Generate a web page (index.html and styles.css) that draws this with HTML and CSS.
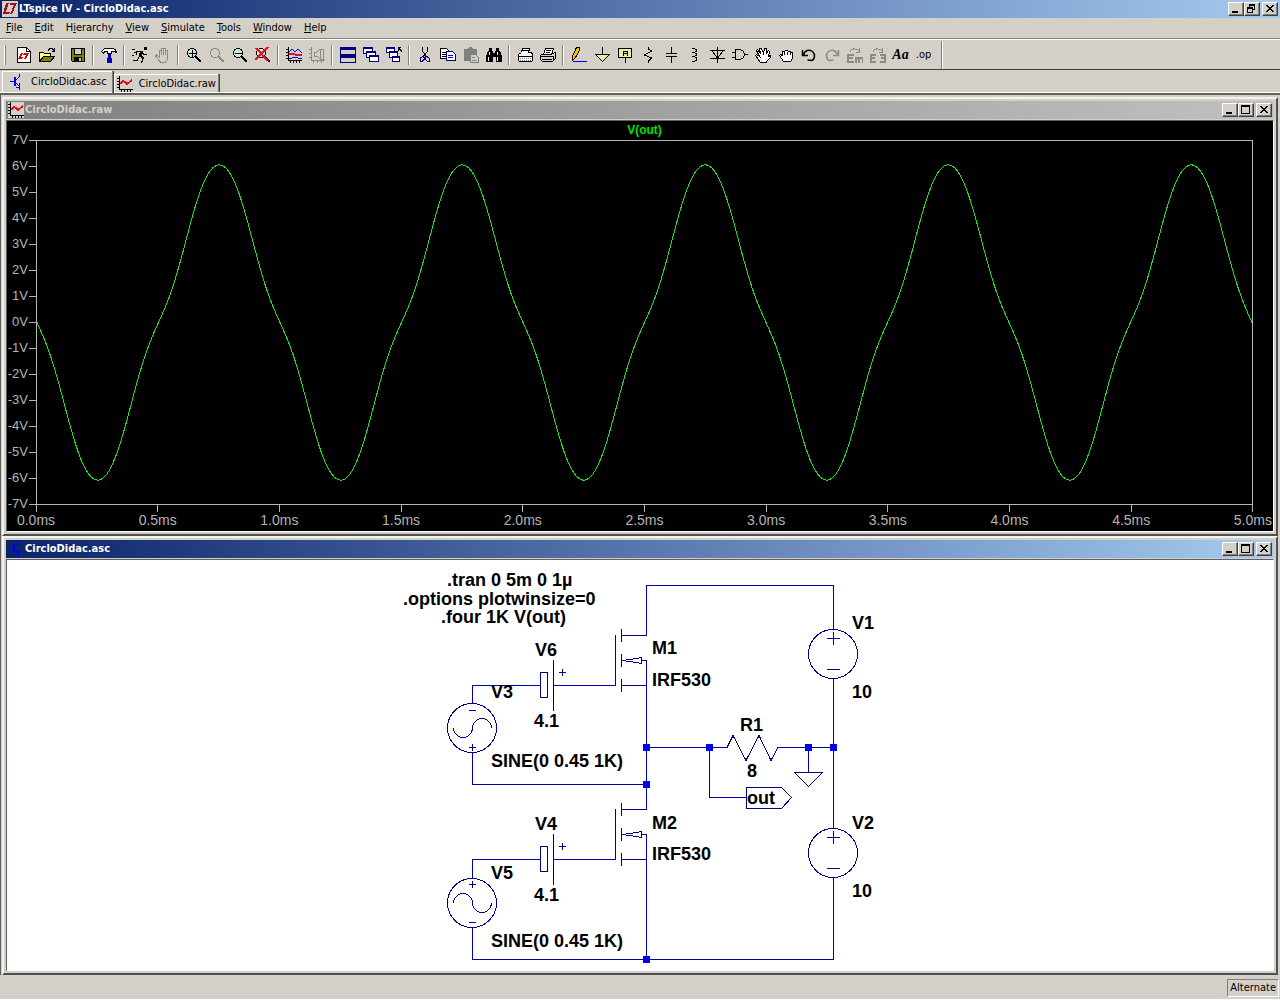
FILE: index.html
```
<!DOCTYPE html>
<html lang="en">
<head>
    <meta charset="UTF-8">
    <meta name="viewport" content="width=device-width, initial-scale=1.0">
    <title>LTspice IV - CircloDidac.asc</title>
    <link rel="stylesheet" href="styles.css">
</head>
<body>
    <!-- shared icons -->
    <svg class="defs" aria-hidden="true">
        <symbol id="i-min" viewBox="0 0 12 10"><path d="M2 7h6v2H2z"/></symbol>
        <symbol id="i-max" viewBox="0 0 12 10"><path fill-rule="evenodd" d="M1 0h9v9H1zM2 2v6h7V2z"/></symbol>
        <symbol id="i-restore" viewBox="0 0 12 10"><path fill-rule="evenodd" d="M3 0h6v6H7v3H1V3h2zM4 2v1h3v2h1V2zM2 5v3h4V5z"/></symbol>
        <symbol id="i-close" viewBox="0 0 12 10"><path d="M2 1h2v1h1v1h2V2h1V1h2v1H9v1H8v1H7v1h1v1h1v1h1v1H8V7H7V6H5v1H4v1H2V7h1V6h1V5h1V4H4V3H3V2H2z"/></symbol>
        <symbol id="i-graph" viewBox="0 0 16 16">
            <path class="k" d="M2.500 0v13.500H16M0 2.500h2M0 5.500h2M0 8.500h2M0 11.500h2M4.500 14v2M7.500 14v2M10.500 14v2M13.500 14v2"/>
            <path class="red wide" d="M3 8l3-3 2 1 2 2 5-4"/>
        </symbol>
        <symbol id="i-npn" viewBox="0 0 16 16"><path class="blue wide" d="M6 3v9"/><path class="blue" d="M1 7.500h5M6.500 6.500l4-4V0M6.500 8.500l4 4V16M10.500 9v4H7"/></symbol>
        <symbol id="i-lens" viewBox="0 0 16 16"><circle cx="6" cy="6" r="4.500"/><path class="wide" d="M10 10l5 5"/></symbol>
    </svg>

    <header class="title-bar">
        <svg class="app-icon" viewBox="0 0 16 16"><path fill="#d4d0c8" d="M0 0h16v16H0z"/><path fill="#a01020" d="M4 2h3L4 11h4l-1 2H1zM8 2h7l-5 11H8l4-9H8z"/></svg>
        <h1>LTspice IV - CircloDidac.asc</h1>
        <div class="controls">
            <button aria-label="Minimize"><svg><use href="#i-min"/></svg></button>
            <button aria-label="Restore"><svg><use href="#i-restore"/></svg></button>
            <button class="close" aria-label="Close"><svg><use href="#i-close"/></svg></button>
        </div>
    </header>

    <nav class="menu">
        <button><u>F</u>ile</button>
        <button><u>E</u>dit</button>
        <button>H<u>i</u>erarchy</button>
        <button><u>V</u>iew</button>
        <button><u>S</u>imulate</button>
        <button><u>T</u>ools</button>
        <button><u>W</u>indow</button>
        <button><u>H</u>elp</button>
    </nav>

    <div class="toolbar">
        <i class="grip"></i>
        <button aria-label="New schematic"><svg viewBox="0 0 16 16"><path fill="#fff" stroke="#000" d="M1.500.5h9l4 4v11h-13z"/><path class="k" d="M10.500.5v4h4"/><path fill="#e00000" d="M5 6h2l-2 4h2l-1 2H2zM8 6h5l-3 6H8l2-4H7z"/></svg></button>
        <button aria-label="Open"><svg viewBox="0 0 16 16"><path fill="#ffff80" stroke="#000" d="M.5 14.500v-9h4l1 1h6v3"/><path fill="#808000" stroke="#000" d="M.5 14.500l4-5h11l-4 5z"/><path class="k" d="M9 3.500l2-2h2l2 2M15.500 1v3h-3"/></svg></button>
        <i class="sep"></i>
        <button aria-label="Save"><svg viewBox="0 0 16 16"><path fill="#808000" stroke="#000" d="M1.500 1.500h13v13h-12l-1-1z"/><path fill="#d4d0c8" stroke="#000" d="M4.500 1.500h7v6h-7z"/><path d="M4 10h8v5H4z"/><path fill="#d4d0c8" d="M9 11h2v3H9z"/></svg></button>
        <i class="sep"></i>
        <button aria-label="Control panel"><svg viewBox="0 0 16 16"><path fill="#fff" stroke="#000" d="M.5 4.500l3-3h7c3 0 5 2 5 4l-2-1h-3v2h-4v-2h-3l-1 2z"/><path fill="#0000c0" d="M7 7h3v4h1v5H6v-5h1z"/></svg></button>
        <i class="sep"></i>
        <button aria-label="Run"><svg viewBox="0 0 16 16"><path d="M12 0h3v3h-3zM8 4h3v2l-1 3 2 2-1 1-4-3z"/><path class="k" d="M4 7.500l1-3h5l2 3h3M10.500 10v3l-1 3M7.500 9l-2 4H1M0 2.500h3M2 5.500h2M0 8.500h2"/></svg></button>
        <button aria-label="Halt" disabled><svg viewBox="0 0 16 16"><path class="off" d="M4.500 14l-4-5 1-1 3 2V3h2v5V1h2v7V1h2v7V3h2v9l-2 3h-5z"/></svg></button>
        <i class="sep"></i>
        <button aria-label="Zoom in"><svg viewBox="0 0 16 16" class="lens"><use href="#i-lens"/><path class="k" d="M3 6.500h7M6.500 3v7"/></svg></button>
        <button aria-label="Pan" disabled><svg viewBox="0 0 16 16" class="lens gray"><use href="#i-lens"/></svg></button>
        <button aria-label="Zoom out"><svg viewBox="0 0 16 16" class="lens"><use href="#i-lens"/><path class="k" d="M3 6.500h7"/></svg></button>
        <button aria-label="Zoom full extents"><svg viewBox="0 0 16 16" class="lens"><use href="#i-lens"/><path class="red wide" d="M1 1l12 13M13 0L0 13"/></svg></button>
        <i class="sep"></i>
        <button aria-label="Autorange"><svg viewBox="0 0 16 16"><path class="k" d="M2.500 0v13.500H16M0 2.500h2M0 5.500h2M0 8.500h2M0 11.500h2M4.500 14v2M7.500 14v2M10.500 14v2M13.500 14v2"/><path class="blue" d="M3 5l3-3 3 3 3-3 4 4"/><path class="red wide" d="M3 7h5l2 1h6"/><path class="blue" d="M3 11h3l3-1 3 1h4"/></svg></button>
        <button aria-label="Plot settings" disabled><svg viewBox="0 0 16 16"><path class="off" d="M2.500 0v13.500H16M0 2.500h2M0 6.500h2M0 10.500h2M4.500 14v2M8.500 14v2M12.500 14v2M5 5h3l3-3h3v10h-3L8 9H5zM11 2v10"/></svg></button>
        <i class="sep"></i>
        <button aria-label="Tile windows"><svg viewBox="0 0 16 16"><path fill="#000080" d="M0 0h16v16H0z"/><path fill="#d4d0c8" d="M1 3h14v4H1zM1 11h14v4H1z"/></svg></button>
        <button aria-label="Cascade windows"><svg viewBox="0 0 16 16"><g class="win"><path d="M.5.500h9v6h-9zM0 1.500h10"/><path d="M3.500 4.500h9v6h-9zM3 5.500h10"/><path d="M6.500 8.500h9v6h-9zM6 9.500h10"/></g></svg></button>
        <button aria-label="Close all windows"><svg viewBox="0 0 16 16"><g class="win"><path d="M.5.500h8v5h-8zM0 1.500h9"/><path d="M3.500 4.500h8v6h-8zM3 5.500h9"/><path d="M6.500 9.500h7v5h-7zM6 10.500h8"/></g><path class="k" d="M12 .5h3M12.500 0v4M13 1l3 4"/></svg></button>
        <i class="sep"></i>
        <button aria-label="Cut"><svg viewBox="0 0 16 16"><path class="k" d="M5.500 0v4l4 6M10.500 0v4l-4 6"/><path fill="none" stroke="#000080" d="M6.500 9l-3 2v3h2l2-2zM9 9l3 2v3h-2l-2-2z"/></svg></button>
        <button aria-label="Copy"><svg viewBox="0 0 16 16"><path fill="#fff" stroke="#000" d="M.5 1.500h6l3 3v7h-9z"/><path class="k" d="M2 5.500h5M2 7.500h5M2 9.500h5"/><path fill="#fff" stroke="#000080" d="M6.500 4.500h6l3 3v6h-9z"/><path class="blue" d="M8 8.500h5M8 10.500h5"/></svg></button>
        <button aria-label="Paste"><svg viewBox="0 0 16 16"><path fill="#808080" d="M1 2h4l1-2h3l1 2h4v12H1z"/><path fill="#d4d0c8" stroke="#808080" d="M7.500 7.500h5l3 3v5h-8z"/><path class="off" d="M9 10.500h3M9 13h5"/></svg></button>
        <button aria-label="Find"><svg viewBox="0 0 16 16"><path d="M3 1h3v3h1v2h2V4h1V1h3v3h1l2 5v6h-6v-5H7v5H0V9l2-5h1z"/><path fill="#fff" d="M3 5h1v3H3zM11 5h1v3h-1zM2 10h1v4H2zM11 10h1v4h-1z"/></svg></button>
        <i class="sep"></i>
        <button aria-label="Print setup"><svg viewBox="0 0 16 16"><path fill="#fff" stroke="#000" d="M1.500 7.500l3-2 1-4h7l-1 4h3l1 2v6l-1 1h-12l-1-1z"/><path class="k" d="M1 9.500h14M6 3.500h5"/><path fill="none" stroke="#808080" stroke-dasharray="1 1" d="M3 11.500h11M3 13.500h11"/></svg></button>
        <button aria-label="Print"><svg viewBox="0 0 16 16"><path fill="#d4d0c8" stroke="#000" d="M.5 8.500l3-2h9l3-1v6l-3 3h-10l-2-2z"/><path fill="#fff" stroke="#000" d="M3.500 7.500l2-6h8l-2 6z"/><path class="k" d="M6 3.500h5M6 5.500h4M1 9.500h12M2 12.500h10M13 9v5"/></svg></button>
        <i class="sep"></i>
        <button aria-label="Wire"><svg viewBox="0 0 16 16"><path fill="#ffc000" stroke="#000" d="M5.500.5h3v3l-4 7-3 3v-4z"/><path class="blue" d="M2 14.500h14"/></svg></button>
        <button aria-label="Ground"><svg viewBox="0 0 16 16"><path fill="#eeeaa8" stroke="#000" d="M1.500 7.500h14l-7 7z"/><path class="k" d="M8.500 0v7"/></svg></button>
        <button aria-label="Label net"><svg viewBox="0 0 16 16"><path fill="#eeeaa8" stroke="#000" d="M1.500 1.500h13v9h-13z"/><path class="k" d="M8.500 11v5M6.500 9V4.500h4V9M6 6.500h4"/></svg></button>
        <button aria-label="Resistor"><svg viewBox="0 0 16 16"><path class="k" d="M8.500 0v2l3 2-7 4 7 3-3 3v2"/></svg></button>
        <button aria-label="Capacitor"><svg viewBox="0 0 16 16"><path class="k" d="M8.500 0v6M8.500 10v6M3 6.500h11M3 9.500h11"/></svg></button>
        <button aria-label="Inductor"><svg viewBox="0 0 16 16"><path class="k" d="M6 1.500h2l2 1v2l-2 1H6h2l2 1v2l-2 1H6h2l2 1v3l-2 1H6"/></svg></button>
        <button aria-label="Diode"><svg viewBox="0 0 16 16"><path class="k" d="M8.500 0v16M1 3.500h15M1 11.500h15M3 4l5.500 7L14 4"/></svg></button>
        <button aria-label="Component"><svg viewBox="0 0 16 16"><path class="k" d="M3.500 2.500h5l3 2 1 3-1 3-3 2h-5zM0 5.500h3M0 10.500h3M12 7.500h4"/></svg></button>
        <button aria-label="Move"><svg viewBox="0 0 16 16"><path fill="#fff" stroke="#000" d="M5.500 15.500l-5-7 1-1 3 2-3-6 1-1 3 4-1-5h2l2 5 1-5h2v5l2-3 1 1-1 5 2-1v2l-4 4v1z"/></svg></button>
        <button aria-label="Drag"><svg viewBox="0 0 16 16"><path fill="#fff" stroke="#000" d="M5.500 14.500l-4-6 1-1 2 1v-4h2l1-1h2l1 1h2l1 1h1v6l-2 3z"/><path class="k" d="M6.500 5v3M9.500 5v3M12.500 5v3"/></svg></button>
        <button aria-label="Undo"><svg viewBox="0 0 16 16"><path class="k round" d="M2.500 8c1-5 6-6 9-3.500s2.500 8-1 9l-4-.5M1.500 3v5.500H7"/></svg></button>
        <button aria-label="Redo" disabled><svg viewBox="0 0 16 16"><path class="off round" d="M13.500 8c-1-5-6-6-9-3.500s-2.500 8 1 9l4-.5M14.500 3v5.500H9"/></svg></button>
        <button aria-label="Rotate" disabled><svg viewBox="0 0 16 16"><path class="off" d="M3 5c1-4 7-4 9-1M12.500 1v4H9"/><path class="off wide" d="M7 8H1v7h6M1 11h5M9 16v-5h7v5M12 11v5"/></svg></button>
        <button aria-label="Mirror" disabled><svg viewBox="0 0 16 16"><path class="off" d="M3 5c1-4 7-4 9-1M12.500 1v4H9"/><path class="off wide" d="M6 8H1v7h5M1 11h4M10 8h5v7h-5M15 11h-4"/></svg></button>
        <button class="text">Aa</button>
        <button class="directive">.op</button>
        <i class="end"></i>
    </div>

    <div class="tabs">
        <button class="tab active"><svg><use href="#i-npn"/></svg>CircloDidac.asc</button>
        <button class="tab"><svg><use href="#i-graph"/></svg>CircloDidac.raw</button>
    </div>

    <main class="mdi">
        <section class="window">
            <header class="title-bar inactive">
                <svg class="app-icon"><use href="#i-graph"/></svg>
                <h2>CircloDidac.raw</h2>
                <div class="controls">
                    <button aria-label="Minimize"><svg><use href="#i-min"/></svg></button>
                    <button aria-label="Maximize"><svg><use href="#i-max"/></svg></button>
                    <button class="close" aria-label="Close"><svg><use href="#i-close"/></svg></button>
                </div>
            </header>
            <div class="pane plot">
                <div class="trace-name">V(out)</div>
                <ol class="y-axis">
                    <li>7V</li><li>6V</li><li>5V</li><li>4V</li><li>3V</li><li>2V</li><li>1V</li><li>0V</li>
                    <li>-1V</li><li>-2V</li><li>-3V</li><li>-4V</li><li>-5V</li><li>-6V</li><li>-7V</li>
                </ol>
                <div class="graph">
                    <svg viewBox="0 0 1216 364" preserveAspectRatio="none"><path id="trace"/></svg>
                </div>
                <ol class="x-axis">
                    <li>0.0ms</li><li>0.5ms</li><li>1.0ms</li><li>1.5ms</li><li>2.0ms</li><li>2.5ms</li>
                    <li>3.0ms</li><li>3.5ms</li><li>4.0ms</li><li>4.5ms</li><li>5.0ms</li>
                </ol>
            </div>
        </section>

        <section class="window">
            <header class="title-bar">
                <svg class="app-icon"><use href="#i-npn"/></svg>
                <h2>CircloDidac.asc</h2>
                <div class="controls">
                    <button aria-label="Minimize"><svg><use href="#i-min"/></svg></button>
                    <button aria-label="Maximize"><svg><use href="#i-max"/></svg></button>
                    <button class="close" aria-label="Close"><svg><use href="#i-close"/></svg></button>
                </div>
            </header>
            <div class="pane sheet">
                <svg class="schematic" width="490" height="410" viewBox="395 560 490 410">
                    <g class="wires">
                        <path d="M646.500 636v-50.500h187V629M833.500 679v149M833.500 878v81.500h-361V928"/>
                        <path d="M472.500 703v-17.500H540M553 685.500h62M472.500 753v31.500h174M472.500 878v-18.500H540M553 859.500h62"/>
                        <path d="M646.500 660v149.500M646.500 834v125M646 747.500h81M778 747.500h55M709.500 747v50.500H746M808.500 747v25"/>
                    </g>
                    <g class="parts">
                        <!-- mosfets -->
                        <g id="m1"><path d="M615.500 635v51M621.500 629v13M621.500 654v13M621.500 679v13M621 635.500h25M621 685.500h25M622 660.500l15-2 4-1v6l-4-1zM641 660.500h5"/></g>
                        <use href="#m1" y="174"/>
                        <!-- bias batteries -->
                        <g id="v6"><path d="M540.500 672.500h7v25h-7zM553.500 660v51M559 672.500h7M562.500 669v7"/></g>
                        <use href="#v6" y="174"/>
                        <!-- supplies -->
                        <g id="v1"><circle cx="833" cy="654" r="24.500"/><path d="M827 638.500h13M833.500 632v13M827 669.500h13"/></g>
                        <use href="#v1" y="199"/>
                        <!-- sine sources -->
                        <circle cx="472" cy="728" r="24.500"/>
                        <path d="M453.500 728a9.500 9.500 0 0 0 19 0a9.500 9.500 0 0 1 19 0M469 710.500h7M469 747.500h7M472.500 744v7"/>
                        <circle cx="472" cy="903" r="24.500"/>
                        <path d="M453.500 903a9.500 9.500 0 0 1 19 0a9.500 9.500 0 0 0 19 0M469 884.500h7M472.500 881v7M469 922.500h7"/>
                        <!-- load, ground and output label -->
                        <path d="M727 747.500l6-12 13 25 13-25 12 25 7-13M794.500 772.500h28l-14 14zM746.500 787.500h35l10 10-10 11h-35z"/>
                    </g>
                    <g class="nodes">
                        <path d="M643 744h7v7h-7zM643 781h7v7h-7zM643 956h7v7h-7zM706 744h7v7h-7zM805 744h7v7h-7zM830 744h7v7h-7z"/>
                    </g>
                    <g class="labels">
                        <text x="447" y="586">.tran 0 5m 0 1µ</text>
                        <text x="403" y="605">.options plotwinsize=0</text>
                        <text x="441" y="623">.four 1K V(out)</text>
                        <text x="535" y="656">V6</text>
                        <text x="534" y="727">4.1</text>
                        <text x="491" y="698">V3</text>
                        <text x="491" y="767">SINE(0 0.45 1K)</text>
                        <text x="652" y="654">M1</text>
                        <text x="652" y="686">IRF530</text>
                        <text x="535" y="830">V4</text>
                        <text x="534" y="901">4.1</text>
                        <text x="491" y="879">V5</text>
                        <text x="491" y="947">SINE(0 0.45 1K)</text>
                        <text x="652" y="829">M2</text>
                        <text x="652" y="860">IRF530</text>
                        <text x="740" y="731">R1</text>
                        <text x="747" y="777">8</text>
                        <text x="747" y="804">out</text>
                        <text x="852" y="629">V1</text>
                        <text x="852" y="698">10</text>
                        <text x="852" y="829">V2</text>
                        <text x="852" y="897">10</text>
                    </g>
                </svg>
            </div>
        </section>
    </main>

    <footer class="status"><span>Alternate</span></footer>

    <script>
        // 1 kHz output with crossover distortion, in volts
        const harmonics = [[1, -5.58], [3, 0.6], [5, 0.1]];
        const points = [];

        for (let x = 0; x <= 1216; x += 2) {
            const phase = 2 * Math.PI * 5 * x / 1216;
            let v = 0;
            for (const [n, amp] of harmonics) {
                v += amp * Math.sin(n * phase);
            }
            points.push(x + ' ' + (182 - v * 26).toFixed(2));
        }

        document.getElementById('trace').setAttribute('d', 'M' + points.join('L'));
    </script>
</body>
</html>
```
FILE: styles.css
```
* {
    box-sizing: border-box;
}
body {
    margin: 0;
    height: 100vh;
    display: flex;
    flex-direction: column;
    background: #d4d0c8;
    color: #000;
    font: 11px/14px "DejaVu Sans Condensed", Tahoma, sans-serif;
}
button {
    margin: 0;
    padding: 0;
    border: none;
    background: none;
    color: inherit;
    font: inherit;
}
svg {
    display: block;
    flex: none;
    shape-rendering: crispEdges;
}
ol {
    margin: 0;
    padding: 0;
    list-style: none;
}
.defs {
    position: absolute;
    width: 0;
    height: 0;
}
.k, .red, .blue, .off {
    fill: none;
    stroke: #000;
}
.red {
    stroke: #e01020;
}
.blue {
    stroke: #0000e0;
}
.off {
    stroke: #8c8a86;
}
.wide {
    stroke-width: 2;
}
.round {
    stroke-width: 1.5;
    shape-rendering: auto;
}

/* title bars */
.title-bar {
    display: flex;
    align-items: center;
    height: 18px;
    flex: none;
    padding: 0 2px;
    color: #fff;
    background: linear-gradient(to right, #0a246a, #a6caf0);
}
.title-bar.inactive {
    color: #d4d0c8;
    background: linear-gradient(to right, #808080, #c0c0c0);
}
.title-bar h1, .title-bar h2 {
    flex: 1;
    margin: 0 0 0 1px;
    font-size: 11px;
    font-weight: bold;
}
.app-icon {
    width: 16px;
    height: 16px;
}
.inactive .app-icon {
    background: #d4d0c8;
}
.controls {
    display: flex;
}
.controls button {
    width: 16px;
    height: 14px;
    padding: 1px;
    background: #d4d0c8;
    border: 1px solid;
    border-color: #fff #404040 #404040 #fff;
    box-shadow: inset -1px -1px #808080;
    color: #000;
}
.controls svg {
    width: 12px;
    height: 10px;
}
.controls .close {
    margin-left: 2px;
}

/* menu and toolbar */
.menu {
    display: flex;
    height: 21px;
    flex: none;
    border-bottom: 1px solid #808080;
}
.menu button {
    padding: 0 6px;
}
.toolbar {
    display: flex;
    align-items: center;
    height: 31px;
    flex: none;
    padding-left: 4px;
    border-top: 1px solid #fff;
    border-bottom: 1px solid #404040;
}
.toolbar button {
    display: flex;
    justify-content: center;
    align-items: center;
    width: 23px;
    height: 22px;
    flex: none;
}
.toolbar svg {
    width: 16px;
    height: 16px;
}
.grip, .sep, .end {
    flex: none;
    height: 20px;
    border-right: 1px solid #808080;
}
.grip {
    width: 2px;
    margin-right: 6px;
    border-left: 1px solid #fff;
}
.sep {
    width: 2px;
    margin: 0 3px;
    border-left: 1px solid #808080;
    border-right-color: #fff;
}
.end {
    height: 28px;
    width: 2px;
    margin-left: 6px;
    border-left: 1px solid #808080;
    border-right-color: #fff;
}
.lens {
    fill: #c8e8e0;
    stroke: #000;
}
.lens.gray {
    fill: none;
    stroke: #8c8a86;
}
.win path {
    fill: #fff;
    stroke: #000080;
}
.toolbar .text {
    font: italic bold 14px "Liberation Serif", serif;
}
.toolbar .directive {
    font-size: 11px;
}

/* document tabs */
.tabs {
    display: flex;
    align-items: flex-start;
    height: 23px;
    flex: none;
    padding: 1px 2px 0;
    border-bottom: 1px solid #fff;
}
.tab {
    display: flex;
    align-items: center;
    gap: 6px;
    height: 18px;
    margin-top: 3px;
    padding: 0 2px;
    border: 1px solid #fff;
    border-width: 1px 0 0 1px;
    box-shadow: 1px 0 #808080, 2px 0 #404040;
}
.tab.active {
    height: 22px;
    margin: 0 2px 0 0;
    padding: 0 5px 2px 6px;
}
.tab svg {
    width: 16px;
    height: 16px;
}

/* child windows */
.mdi {
    flex: 1;
    min-height: 0;
    display: flex;
    flex-direction: column;
    padding: 2px 2px 0 1px;
    border-top: 2px solid #606060;
    border-left: 1px solid #606060;
}
.window {
    flex: 1;
    min-height: 0;
    display: flex;
    flex-direction: column;
    padding: 2px;
    border: 2px solid;
    border-color: #f4f2ee #505050 #505050 #f4f2ee;
}
.pane {
    flex: 1;
    min-height: 0;
    margin-top: 1px;
    border: 1px solid;
    border-color: #606060 #fff #fff #606060;
}
.plot {
    display: grid;
    grid-template-columns: 29px 1fr;
    grid-template-rows: 19px 1fr 26px;
    padding-right: 20px;
    background: #000;
    color: #b4b4b4;
    font: 13px/16px "Liberation Sans", Arial, sans-serif;
}
.trace-name {
    grid-column: 2;
    padding-top: 1px;
    text-align: center;
    color: #00e000;
    font-size: 12px;
    font-weight: bold;
}
.y-axis {
    display: flex;
    flex-direction: column;
    margin: -13px 0 -12px;
}
.y-axis li {
    flex: 1;
    display: flex;
    justify-content: flex-end;
    align-items: center;
    white-space: nowrap;
}
.y-axis li::after {
    content: "";
    width: 7px;
    height: 1px;
    margin-left: 1px;
    background: #b4b4b4;
}
.graph {
    min-height: 0;
    border: 1px solid #b4b4b4;
}
.graph svg {
    width: 100%;
    height: 100%;
}
#trace {
    fill: none;
    stroke: #20e020;
    vector-effect: non-scaling-stroke;
}
.x-axis {
    grid-column: 2;
    display: flex;
    justify-content: space-between;
}
.x-axis li {
    width: 0;
    display: flex;
    flex-direction: column;
    align-items: center;
    font-size: 14px;
}
.x-axis li::before {
    content: "";
    width: 1px;
    height: 7px;
    flex: none;
    background: #b4b4b4;
}

/* schematic sheet */
.sheet {
    display: flex;
    justify-content: center;
    background: #fff;
}
.wires, .parts {
    fill: none;
    stroke: #0000b0;
}
.parts {
    stroke: #000088;
}
.nodes {
    fill: #0000f0;
}
.labels {
    font: bold 18px "Liberation Sans", Arial, sans-serif;
}

.status {
    display: flex;
    justify-content: flex-end;
    height: 25px;
    flex: none;
    padding: 4px 1px 2px;
    border-bottom: 1px solid #fff;
}
.status span {
    padding: 1px 2px;
    border: 1px solid;
    border-color: #808080 #fff #fff #808080;
}
```
